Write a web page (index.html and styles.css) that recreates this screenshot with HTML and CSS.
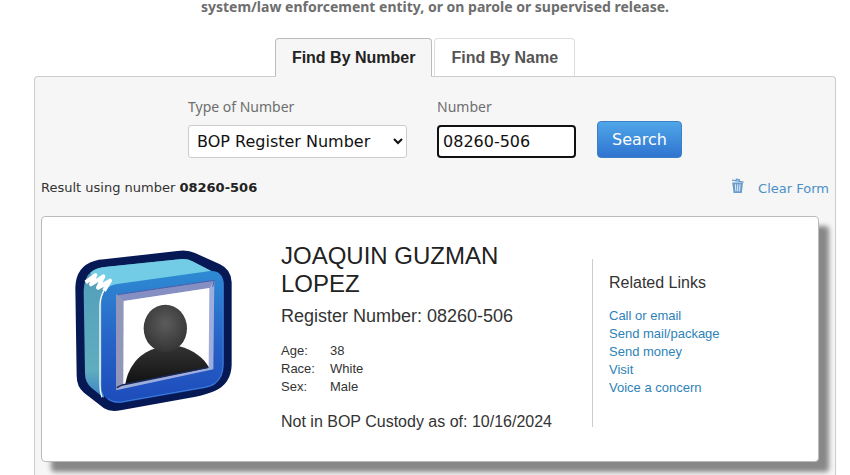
FILE: index.html
```html
<!DOCTYPE html>
<html lang="en">
<head>
    <meta charset="UTF-8">
    <meta name="viewport" content="width=device-width, initial-scale=1.0">
    <title>Find an Inmate</title>
    <link rel="stylesheet" href="styles.css">
</head>
<body>
    <main class="page">
        <p class="notice">system/law enforcement entity, or on parole or supervised release.</p>

        <div class="tabs" role="tablist">
            <button type="button" class="tab active" role="tab" aria-selected="true">Find By Number</button>
            <button type="button" class="tab" role="tab" aria-selected="false">Find By Name</button>
        </div>

        <section class="panel">
            <form class="search-form" onsubmit="return false">
                <div class="field">
                    <label for="number-type">Type of Number</label>
                    <select id="number-type">
                        <option>BOP Register Number</option>
                        <option>DCDC Number</option>
                        <option>FBI Number</option>
                        <option>INS Number</option>
                    </select>
                </div>
                <div class="field number-field">
                    <label for="number">Number</label>
                    <input type="text" id="number" value="08260-506">
                </div>
                <button type="submit" class="search-btn">Search</button>
            </form>

            <div class="result-bar">
                <p>Result using number <strong>08260-506</strong></p>
                <a href="#" class="clear-link">
                    <svg width="14" height="16" viewBox="0 0 14 16" aria-hidden="true">
                        <path d="M1 2.2 L12.6 4.2 M5 2.6 L5.4 1.2 L8.4 1.7 L8.3 3.2" fill="none" stroke="#6a9dcc" stroke-width="1.3"/>
                        <path d="M1.2 4.4 H12 L10.8 15 H2.6 Z" fill="#6a9dcc"/>
                        <path d="M4.4 6.3 L4.9 13.3 M6.7 6.3 V13.3 M9 6.3 L8.5 13.3" stroke="#e6eff7" stroke-width="1" fill="none"/>
                    </svg>
                    <span>Clear Form</span>
                </a>
            </div>

            <article class="card">
                <svg class="photo" viewBox="40 25 480 490" role="img" aria-label="No photo available">
                    <defs>
                        <linearGradient id="front" x1="0" y1="0" x2="0" y2="1">
                            <stop offset="0" stop-color="#2e8bd3"/>
                            <stop offset="0.5" stop-color="#2865c8"/>
                            <stop offset="1" stop-color="#1d4bbb"/>
                        </linearGradient>
                        <linearGradient id="side" x1="0" y1="0" x2="0" y2="1">
                            <stop offset="0" stop-color="#529dba"/>
                            <stop offset="0.8" stop-color="#60adbf"/>
                            <stop offset="1" stop-color="#3b83c5"/>
                        </linearGradient>
                        <radialGradient id="head" cx="0.5" cy="0.4" r="0.6">
                            <stop offset="0" stop-color="#5c5c5c"/>
                            <stop offset="1" stop-color="#353535"/>
                        </radialGradient>
                        <linearGradient id="torso" x1="0" y1="0" x2="0" y2="1">
                            <stop offset="0" stop-color="#333"/>
                            <stop offset="1" stop-color="#111"/>
                        </linearGradient>
                    </defs>
                    <path d="M130 56 L350 31 Q380 26 403 37 L478 71 Q512 87 513 125 V372 Q512 428 462 451 Q440 461 405 468 L180 509 Q149 515 130 503 L70 456 Q48 438 48 405 L44 140 Q46 77 101 61 Q113 57 130 56 Z" fill="#071954"/>
                    <path d="M76 115 Q88 86 125 80 L357 56 Q377 53 393 61 L448 90 L460 110 L180 132 L130 165 V472 L92 441 Q73 426 73 398 L69 150 Q69 130 76 115 Z" fill="url(#side)"/>
                    <path d="M88 97 Q104 82 132 79 L357 56 Q378 53 395 62 L454 92 L455 110 L170 140 L134 150 Z" fill="#72cce5"/>
                    <path d="M170 130 L448 91 Q487 89 489 129 V373 Q489 410 465 429 Q455 438 435 442 L180 487 Q158 489 142 478 Q122 463 122 435 V184 Q123 137 170 130 Z" fill="url(#front)"/>
                    <path d="M470 98 Q486 108 487 130 V374 Q486 411 461 429 Q453 436 430 440 L181 484 Q157 486 142 474" fill="none" stroke="#3d7fd6" stroke-width="3"/>
                    <path d="M124 470 Q117 452 118 430 V192 Q119 169 130 149" fill="none" stroke="#fff" stroke-width="4"/>
                    <path d="M75 125 L104 103 L91 131 L128 107 L112 141 L148 120 L130 150" fill="none" stroke="#fff" stroke-width="12" stroke-linejoin="round"/>
                    <path d="M166 162 L461 119 L458 386 L166 449 Z" fill="#9faddc"/>
                    <path d="M166 162 L461 119 L446 142 L189 181 Z" fill="#868fc2"/>
                    <path d="M166 162 L189 181 L189 431 L166 449 Z" fill="#9297ba"/>
                    <path d="M170 162 L461 119 L456 139" fill="none" stroke="#435fac" stroke-width="3"/>
                    <path d="M189 181 L446 142 L444 380 L188 432 Z" fill="#fff"/>
                    <path d="M194 431 C202 376 239 337 279 325 L356 317 C398 328 430 353 444 379 L442 382 Z" fill="url(#torso)"/>
                    <ellipse cx="314" cy="263" rx="65" ry="71" fill="url(#head)"/>
                    <path d="M168 441 L185 433 L443 380" fill="none" stroke="#152856" stroke-width="4"/>
                </svg>

                <div class="details">
                    <h1>JOAQUIN GUZMAN LOPEZ</h1>
                    <p class="register">Register Number: 08260-506</p>
                    <dl class="facts">
                        <dt>Age:</dt><dd>38</dd>
                        <dt>Race:</dt><dd>White</dd>
                        <dt>Sex:</dt><dd>Male</dd>
                    </dl>
                    <p class="custody">Not in BOP Custody as of: 10/16/2024</p>
                </div>

                <nav class="related">
                    <h2>Related Links</h2>
                    <ul>
                        <li><a href="#">Call or email</a></li>
                        <li><a href="#">Send mail/package</a></li>
                        <li><a href="#">Send money</a></li>
                        <li><a href="#">Visit</a></li>
                        <li><a href="#">Voice a concern</a></li>
                    </ul>
                </nav>
            </article>
        </section>
    </main>
</body>
</html>
```
FILE: styles.css
```css
* {
    box-sizing: border-box;
}

body {
    margin: 0;
    background: #fff;
    color: #333;
    font-family: Verdana, "DejaVu Sans", sans-serif;
    font-size: 13px;
}

h1, h2, p, ul, dl, dd {
    margin: 0;
    padding: 0;
    font-weight: normal;
}

a {
    color: #2e82b8;
    text-decoration: none;
}

a:hover {
    text-decoration: underline;
}

.page {
    display: flex;
    flex-direction: column;
    min-height: 100vh;
    padding: 0 14px 0 34px;
}

.notice {
    height: 38px;
    color: #6e6e6e;
    font-family: "Noto Sans", sans-serif;
    font-size: 14px;
    font-weight: bold;
    line-height: 14px;
    text-align: center;
}

/* Tabs */
.tabs {
    display: flex;
    justify-content: center;
    gap: 2px;
    margin-bottom: -1px;
    padding-right: 20px;
}

.tab {
    height: 39px;
    padding: 0 16px;
    background: #fff;
    border: 1px solid #ddd;
    border-bottom-color: #ccc;
    border-radius: 4px 4px 0 0;
    color: #555;
    font-family: "Liberation Sans", Arial, sans-serif;
    font-size: 16px;
    font-weight: bold;
    cursor: pointer;
}

.tab.active {
    position: relative;
    background: #f6f6f6;
    border-color: #bbb;
    border-bottom-color: #f6f6f6;
    color: #222;
}

.panel {
    flex: 1;
    padding: 20px 16px 12px 6px;
    background: #f6f6f6;
    border: 1px solid #ccc;
    border-bottom: none;
    border-radius: 4px 4px 0 0;
}

/* Search form */
.search-form {
    display: flex;
    justify-content: center;
    align-items: flex-end;
    gap: 21px;
    margin-right: -10px;
}

.field {
    display: flex;
    flex-direction: column;
    gap: 8px;
}

.number-field {
    margin-left: 9px;
}

.field label {
    color: #6e6e6e;
    font-family: "Noto Sans", sans-serif;
    font-size: 14px;
    line-height: 20px;
}

.field select,
.field input {
    height: 33px;
    background: #fff;
    color: #111;
    font-family: inherit;
    font-size: 16px;
}

.field select {
    width: 219px;
    padding: 0 4px;
    border: 1px solid #ccc;
    border-radius: 3px;
}

.field input {
    width: 139px;
    padding: 0 4px;
    border: 2px solid #111;
    border-radius: 4px;
    outline: none;
}

.search-btn {
    height: 37px;
    padding: 0 14px;
    background: linear-gradient(#4fa6e8, #2f74d0);
    border: 1px solid #3b80c4;
    border-radius: 4px;
    color: #fff;
    font-family: inherit;
    font-size: 16px;
    cursor: pointer;
}

.search-btn:hover {
    background: #2f74d0;
}

.result-bar {
    display: flex;
    justify-content: space-between;
    margin: 20px -10px 16px 0;
    line-height: 20px;
}

.result-bar strong {
    color: #222;
}

.clear-link {
    display: flex;
    gap: 13px;
    color: #4a8fc7;
    line-height: 22px;
}

/* Result card */
.card {
    display: flex;
    align-items: center;
    min-height: 246px;
    padding: 8px 16px 0 32px;
    background: #fff;
    border: 1px solid #bbb;
    border-radius: 4px;
    box-shadow: 10px 10px 5px #888;
    font-family: "Liberation Sans", Arial, sans-serif;
    font-size: 13px;
}

.photo {
    flex: none;
    width: 160px;
    margin-bottom: 24px;
}

.details {
    flex: 1;
    padding: 0 40px 4px 47px;
}

.details h1 {
    max-width: 240px;
    color: #222;
    font-size: 24px;
    line-height: 28px;
}

.register,
.custody {
    line-height: 36px;
    white-space: nowrap;
}

.register {
    font-size: 18px;
}

.custody {
    font-size: 16px;
}

.facts {
    display: grid;
    grid-template-columns: 49px 1fr;
    margin: 8px 0;
    line-height: 18px;
}

.related {
    flex: none;
    width: 210px;
    min-height: 168px;
    padding: 14px 16px;
    border-left: 1px solid #ccc;
}

.related h2 {
    margin-bottom: 14px;
    font-size: 16px;
    line-height: 20px;
}

.related ul {
    list-style: none;
    line-height: 18px;
}
```
